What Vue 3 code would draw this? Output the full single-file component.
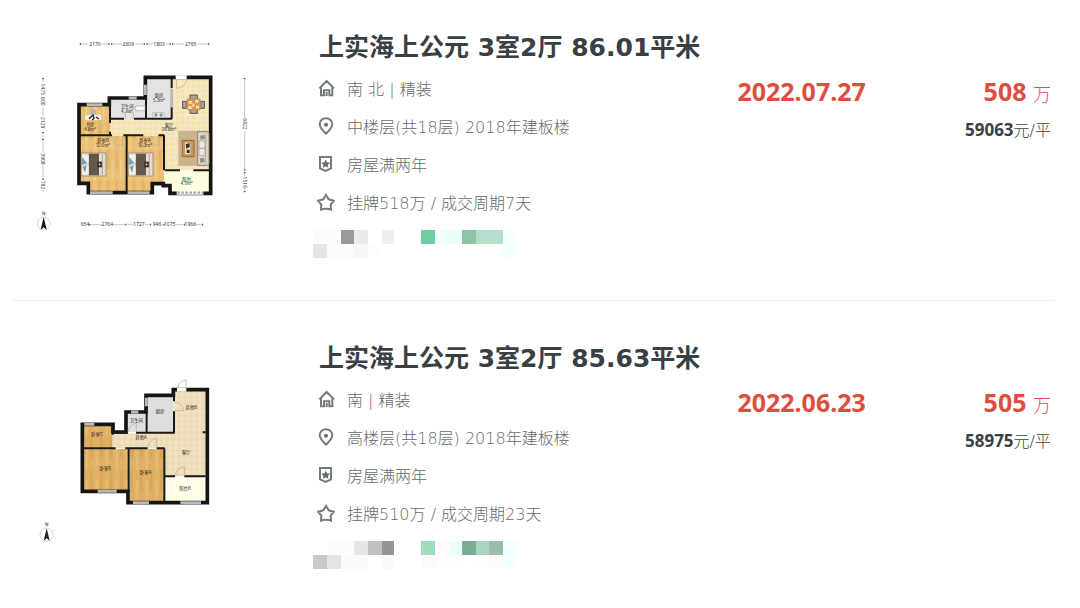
<script setup>
const listings = [
  {
    id: 'a',
    title: '上实海上公元 3室2厅 86.01平米',
    rows: ['南 北 | 精装', '中楼层(共18层) 2018年建板楼', '房屋满两年', '挂牌518万 / 成交周期7天'],
    date: '2022.07.27',
    price: '508',
    unit: '59063',
    mosaic: [
      [0, 0, 84, '#fbfbfb'], [84, 0, 39, '#999999'], [123, 0, 41, '#ebebeb'], [206, 0, 38, '#efefef'],
      [324, 0, 42, '#6fcda2'], [366, 0, 42, '#effffd'], [408, 0, 39, '#e9fff9'], [447, 0, 42, '#8cc5aa'],
      [489, 0, 80, '#b4dfca'], [569, 0, 41, '#f3ffff'],
      [0, 42, 42, '#e6e6e6'], [42, 42, 81, '#fbfbfb'], [123, 42, 41, '#f7f7f7'], [164, 42, 40, '#fdfdfd'], [569, 42, 41, '#f3ffff']
    ]
  },
  {
    id: 'b',
    title: '上实海上公元 3室2厅 85.63平米',
    rows: ['南 | 精装', '高楼层(共18层) 2018年建板楼', '房屋满两年', '挂牌510万 / 成交周期23天'],
    date: '2022.06.23',
    price: '505',
    unit: '58975',
    mosaic: [
      [42, 0, 81, '#fcfcfc'], [123, 0, 41, '#e7e7e7'], [164, 0, 42, '#c0c0c0'], [206, 0, 38, '#969696'],
      [324, 0, 42, '#9fddbc'], [366, 0, 42, '#fffbfd'], [408, 0, 39, '#ecfff7'], [447, 0, 42, '#79af95'],
      [489, 0, 39, '#a8d6c0'], [528, 0, 41, '#9bbdac'], [569, 0, 41, '#f3ffff'],
      [0, 42, 42, '#c9c9c9'], [42, 42, 42, '#e4e4e4'], [84, 42, 80, '#fafafa'], [206, 42, 38, '#f9f9f9'],
      [324, 42, 42, '#fff8fc'], [366, 42, 42, '#fffcfd'], [408, 42, 39, '#f9fffc'], [489, 42, 39, '#faffff'], [528, 42, 41, '#fffafc'], [569, 42, 41, '#f3ffff']
    ]
  }
]

const widths = [
  [225, '2170'], [325, '2609'], [417, '1803'], [512, '2765']
]
const depths = [
  [195, '654'], [262, '2764'], [357, '1727'], [411, '946'], [449, '1075'], [511, '1966']
]
</script>

<template>
  <main class="page">
    <ul class="list">
      <li v-for="item in listings" :key="item.id" class="item">
        <svg v-if="item.id === 'a'" class="plan" viewBox="0 0 720 630" role="img" aria-label="户型图">
          <defs>
            <pattern id="wood-a" width="26" height="90" patternUnits="userSpaceOnUse">
              <rect width="26" height="90" fill="#ebc077" />
              <rect width="9" height="58" fill="#e4b567" />
              <rect x="14" y="30" width="7" height="60" fill="#f0ca86" />
            </pattern>
            <pattern id="tile-a" width="16" height="16" patternUnits="userSpaceOnUse">
              <rect width="16" height="16" fill="#f6e8c0" />
              <path d="M8 1l7 7-7 7-7-7z" fill="#f2e1b3" />
            </pattern>
          </defs>
          <rect x="180" y="228" width="92" height="90" fill="url(#wood-a)" />
          <path d="M180 318h140v170H207v-28h-27zM322 318h111v144h-38v26h-73z" fill="url(#wood-a)" />
          <path d="M272 207h106v60H272zM380 146h75v119h-75z" fill="#e3e3e3" />
          <path d="M456 146h114v275H433V318H272v-51h184z" fill="url(#tile-a)" />
          <path d="M434 422h136v65H450v-22h-16z" fill="#fdfde0" />

          <g class="dim-line">
            <path d="M181 42h24M245 42h22M275 42h32M345 42h28M381 42h18M437 42h14M458 42h35M532 42h34" />
            <path d="M209 584h36M280 584h38M323 584h17M375 584h18M426 584h6M468 584h26M528 584h20" />
            <path d="M69 146v10M69 232v28M69 308v12M69 328v40M69 404v44M69 480v5M674 146v118M674 302v118M674 428v12M674 474v11" />
            <path d="M181 39v6M267 39v6M275 39v6M373 39v6M381 39v6M451 39v6M458 39v6M566 39v6M209 581v6M318 581v6M392 581v6M432 581v6M494 581v6M548 581v6M66 146h6M66 308h6M66 328h6M66 448h6M671 146h6M671 420h6M671 428h6M671 485h6" class="tick" />
          </g>
          <g class="dim">
            <text v-for="d in widths" :key="d[1]" :x="d[0]" y="47">{{ d[1] }}</text>
            <text v-for="d in depths" :key="d[1]" :x="d[0]" y="589">{{ d[1] }}</text>
            <text transform="translate(64 178) rotate(90)">1475</text>
            <text transform="translate(64 214) rotate(90)">600</text>
            <text transform="translate(64 278) rotate(90)">2129</text>
            <text transform="translate(64 387) rotate(90)">3908</text>
            <text transform="translate(64 465) rotate(90)">782</text>
            <text transform="translate(669 282) rotate(90)">6822</text>
            <text transform="translate(669 457) rotate(90)">1516</text>
          </g>

          <path class="outer" d="M177 224h91v-20h108v-62h196v348H450v-23h-20v-6h-33v27H205v-28h-28z" />
          <path class="inner" d="M270 207v72M270 305v13M180 316h96M310 316h60M415 316h18M320 316v171M432 316v104M272 266h40M342 266h114M378 207v58M455 146v28M455 200v2M455 232v34M434 421h46M520 421h50" />
          <path class="opening" d="M200 224h47M326 204h24M376 164v31M210 488h68M323 488h66M455 176v56" />
          <path class="gap" d="M467 142h33M470 488h80" />
          <path d="M472 488h78" stroke="#a8a8a8" stroke-width="7" stroke-dasharray="8 4" />
          <g class="door">
            <path d="M469 147v28c16 0 29-12 31-28M270 279c-18 0-28 8-30 26h30M278 318c0 18 12 30 29 30v-30M386 318c0 18 12 30 31 30v-30M316 266v-20h24v20" />
          </g>
          <path d="M475 302h90v105h-90z" fill="#c9b38d" />
          <path d="M487 331h35v49h-35z" fill="#ca965a" stroke="#96652f" stroke-width="3" />
          <path d="M495 338h16v34h-16z" fill="#eee3c5" />
          <path d="M497 343l12-4v12l-10 5zM500 359h9v10h-9z" fill="#333" />
          <path d="M533 305h28q6 0 6 6v90q0 5-6 5h-28z" fill="#ddd5c8" stroke="#90877b" stroke-width="3" />
          <path d="M537 333h18v22h-18zM537 355h18v22h-18zM557 310v91" fill="#eee8dd" stroke="#a59c8f" stroke-width="2" />
          <path d="M540 317l13-3 2 12-13 3zM540 385l12-2 2 12-13 3z" fill="#998e85" />

          <g fill="#a9a6a2" stroke="#55524f" stroke-width="3">
            <path d="M510 195h22v11h-22zM510 239h22v11h-22zM488 214h11v21h-11zM542 214h11v21h-11z" />
          </g>
          <rect x="500" y="205" width="42" height="36" rx="4" fill="#d49b4c" />
          <path d="M506 213h10v8h-10zM526 210h9v8h-9zM505 229h10v8h-10zM528 228h9v7h-9zM518 217l7 10-8 5z" fill="#f2dfbf" />

          <g v-for="x in [184, 325]" :key="x" :transform="`translate(${x} 368)`">
            <path d="M0 1h74v69H0z" fill="#e5ddd1" stroke="#8a7d6c" stroke-width="2" />
            <path d="M22 3h31v65H22z" fill="#65574b" />
            <path d="M2 6h20v26H2zM2 38h20v27H2z" fill="#f4f1eb" />
            <path d="M2 13l16 18L2 38zM3 42l13-5-4 24z" fill="#77a6b8" />
            <path d="M48 27h15v17H48z" fill="#302e2a" />
            <path d="M52 31l7 4-6 5z" fill="#d8c9a7" />
            <path d="M63 3v65" stroke="#b9aa97" stroke-width="3" />
          </g>
          <path d="M211 238h17v16h-17z" fill="#b8b5ae" />
          <path d="M195 254h49v17h-49z" fill="#f4f1ec" stroke="#c8ab79" />
          <path d="M207 266l12-11 3 10-5 5M228 261l9 6" stroke="#262626" stroke-width="4" fill="none" />
          <path d="M347 228h28v14h-28zM399 248h33v14h-33z" fill="#f9f9f9" stroke="#a7a7a7" stroke-width="2" />
          <circle cx="408" cy="255" r="5" fill="#7e91a0" /><circle cx="423" cy="255" r="5" fill="#7e91a0" />
          <g class="room">
            <text x="417" y="202">厨房</text><text x="417" y="217">5.3m²</text>
            <text x="321" y="235">卫生间</text><text x="321" y="249">4.7m²</text>
            <text x="210" y="288">书房</text><text x="210" y="302">4.8m²</text>
            <text x="447" y="290">客厅</text><text x="447" y="304">26.8m²</text>
            <text x="249" y="337">卧室B</text><text x="249" y="351">12.6m²</text>
            <text x="375" y="337">卧室A</text><text x="375" y="351">10.3m²</text>
            <text x="500" y="452">阳台</text><text x="500" y="466">4.5m²</text>
          </g>
          <text class="north" x="71" y="554">N</text>
          <circle class="compass" cx="71" cy="581" r="19" />
          <path d="M71 561l9 38-9-7-9 7z" fill="#111" />
        </svg>

        <svg v-else class="plan" viewBox="0 -87 720 630" role="img" aria-label="户型图">
          <defs>
            <pattern id="wood-b" width="30" height="100" patternUnits="userSpaceOnUse">
              <rect width="30" height="100" fill="#dfb064" />
              <rect width="8" height="65" fill="#d8a657" />
              <rect x="16" y="30" width="8" height="70" fill="#e5b96e" />
            </pattern>
            <pattern id="tile-b" width="18" height="18" patternUnits="userSpaceOnUse">
              <rect width="18" height="18" fill="#efe1be" />
              <path d="M9 1l8 8-8 8-8-8z" fill="#ebdbb4" />
            </pattern>
          </defs>
          <path d="M191 167h87v66h-87zM191 237h133v124H191zM329 237h103v158H329z" fill="url(#wood-b)" />
          <path d="M323 130h56v56h-56zM384 82h77v104h-77z" fill="#dedede" />
          <path d="M463 63h94v256H434v-84H278v-45h185z" fill="url(#tile-b)" />
          <path d="M435 321h122v74H435z" fill="#fefee8" />
          <path class="outer" d="M187 163h92v23h39v-60h60V76h82V59h102v339H324v-34H187z" />
          <path class="inner" d="M191 235h96M316 235h67M410 235h24M326 235v128M433 235v161M433 319h32M493 319h64M279 188h44M348 188h116M380 82v106M462 64v30M462 124v64M278 168v26M548 187h9" />
          <path class="opening" d="M193 163h30M333 126h22M379 83v26M233 364h57M339 398h48M481 398h62" />
          <path class="gap" d="M471 59h28" />
          <g class="door">
            <path d="M473 58c0-17 10-26 25-28v28M462 96c17 1 27 11 28 26h-28M325 187c1-17 10-25 24-27v27M383 233c1-17 12-25 27-28v28M467 318c0-17 10-26 26-28v28" />
          </g>
          <g class="room">
            <text x="514" y="116">其他B</text><text x="420" y="128">厨房</text><text x="349" y="157">卫生间</text>
            <text x="231" y="197">卧室C</text><text x="363" y="208">其他A</text><text x="498" y="252">客厅</text>
            <text x="256" y="301">卧室B</text><text x="377" y="313">卧室A</text><text x="495" y="361">阳台B</text>
          </g>
          <text class="north" x="80" y="469">N</text>
          <circle class="compass" cx="80" cy="494" r="20" />
          <path d="M80 475l9 37-9-7-9 7z" fill="#222" />
        </svg>

        <div class="details">
          <h2 class="title">{{ item.title }}</h2>
          <ul class="facts">
            <li v-for="(row, i) in item.rows" :key="i" class="fact">
              <svg class="icon" viewBox="0 0 54 54" aria-hidden="true">
                <path v-if="i === 0" d="M7 28L29 6l22 22M12 24v25h9V34h16v15h9V24M29 39v12" />
                <g v-else-if="i === 1">
                  <path d="M27 50C18 40 8 33 8 21a19 17 0 0 1 38 0C46 33 36 40 27 50z" />
                  <circle cx="27" cy="23" r="6" class="solid" />
                </g>
                <g v-else-if="i === 2">
                  <path d="M9 6h33v34l-16 8-17-8z" />
                  <path class="solid" d="M26 14l4 8 9 1-6 6 1 9-8-4-8 4 1-9-6-6 9-1z" />
                </g>
                <path v-else d="M27 6l8 13 16 4-10 12 1 15q-15-5-30 0l1-15L3 23l16-4z" />
              </svg>
              <span>{{ row }}</span>
            </li>
          </ul>
          <svg class="mosaic" viewBox="0 0 612 84" aria-hidden="true" shape-rendering="crispEdges">
            <rect v-for="(m, i) in item.mosaic" :key="i" :x="m[0]" :y="m[1]" :width="m[2]" height="42" :fill="m[3]" />
          </svg>
        </div>
        <time class="date">{{ item.date }}</time>
        <div class="cost">
          <p class="total"><strong>{{ item.price }}</strong> <span>万</span></p>
          <p class="per"><strong>{{ item.unit }}</strong>元/平</p>
        </div>
      </li>
    </ul>
  </main>
</template>

<style>
body {
  margin: 0;
  background: #fff;
}
</style>

<style scoped>
.page {
  padding: 30px 26px 0 12px;
  font-family: "DejaVu Sans", "Noto Sans CJK SC", sans-serif;
  color: #394043;
}
.list, .facts {
  list-style: none;
  margin: 0;
  padding: 0;
}
.item {
  display: grid;
  grid-template-columns: 301px minmax(0, 424fr) auto minmax(0, 188fr);
  align-items: start;
  padding-bottom: 42px;
}
.item + .item {
  border-top: 1px solid #f2f2f2;
  padding-top: 40px;
}
.item:last-child {
  padding-bottom: 0;
}
.plan {
  display: block;
  width: 240px;
  height: 210px;
  margin-left: 8px;
}
.outer {
  fill: none;
  stroke: #151515;
  stroke-width: 11;
}
.inner {
  fill: none;
  stroke: #191919;
  stroke-width: 6;
}
.opening {
  fill: none;
  stroke: #b9b9b9;
  stroke-width: 9;
}
.gap {
  fill: none;
  stroke: #fff;
  stroke-width: 12;
}
.door {
  fill: none;
  stroke: #b5a88c;
  stroke-width: 2;
}
.dim-line {
  fill: none;
  stroke: #aaa;
  stroke-width: 2;
}
.tick {
  stroke: #555;
  stroke-width: 3;
}
.dim {
  font-family: "Noto Sans", sans-serif;
  font-size: 15px;
  text-anchor: middle;
  fill: #333;
}
.room {
  font-family: Inter, "Noto Sans CJK SC", sans-serif;
  font-size: 13px;
  text-anchor: middle;
  fill: #222;
}
.north {
  font-size: 14px;
  text-anchor: middle;
  fill: #222;
}
.compass {
  fill: none;
  stroke: #c5c5c5;
  stroke-width: 2;
}
.title {
  margin: 0 0 3px;
  padding-left: 6px;
  font-size: 25px;
  line-height: 36px;
  font-weight: 600;
  white-space: nowrap;
}
.fact {
  display: flex;
  align-items: center;
  gap: 12px;
  height: 38px;
  padding-left: 4px;
  font-size: 16px;
  font-weight: 300;
  color: #646a6d;
  white-space: nowrap;
}
.icon {
  width: 18px;
  height: 18px;
  fill: none;
  stroke: #747b7d;
  stroke-width: 6;
}
.icon .solid {
  fill: #686f71;
  stroke: none;
}
.mosaic {
  display: block;
  width: 204px;
  height: 28px;
  margin-top: 9px;
}
.date, .total {
  font-family: "Noto Sans", "Noto Sans CJK SC", sans-serif;
  font-size: 25px;
  line-height: 38px;
  color: #dd4d40;
}
.date {
  margin-top: 42px;
  font-weight: 700;
}
.cost {
  margin-top: 42px;
  padding-right: 3px;
  text-align: right;
  white-space: nowrap;
}
.total, .per {
  margin: 0;
}
.total strong, .per strong {
  font-weight: 700;
}
.total span {
  font-size: 18px;
  font-weight: 300;
}
.per {
  font-size: 16px;
  line-height: 34px;
  font-weight: 300;
}
.per strong {
  font-family: "Noto Sans", sans-serif;
  font-size: 17px;
}
</style>
